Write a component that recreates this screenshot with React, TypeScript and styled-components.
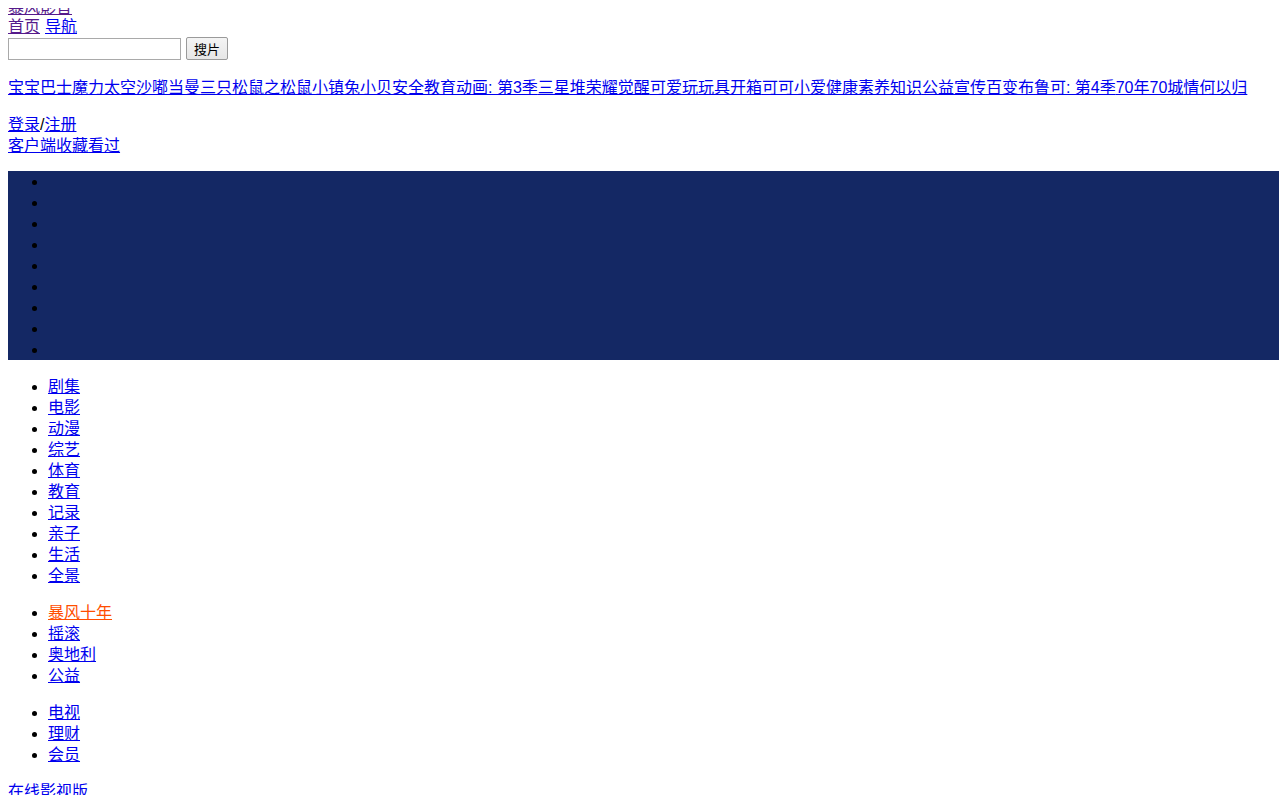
import React from 'react';
import styled, { createGlobalStyle } from 'styled-components';

const GlobalStyle = createGlobalStyle`
  body {
    margin: 8px;
    font-family: "Liberation Sans", "Noto Sans CJK SC", sans-serif;
    font-size: 16px;
    line-height: 21px;
    color: #000;
    background: #fff;
    overflow-x: hidden;
  }
`;

const Link = styled.a<{ $visited?: boolean; $hot?: boolean }>`
  color: ${({ $visited, $hot }) => ($hot ? '#ff4e00' : $visited ? '#551a8b' : '#0000ee')};
  text-decoration: underline;
  cursor: pointer;
`;

const Header = styled.header`
  margin-top: -11px;
`;

const Logo = styled.div`
  height: 19px;
`;

const TopNav = styled.div`
  display: flex;
  gap: 5px;
  height: 21px;
`;

const SearchForm = styled.form`
  display: flex;
  align-items: flex-start;
  gap: 5px;
  height: 24px;
  margin: 0;
`;

const SearchInput = styled.input`
  box-sizing: border-box;
  width: 173px;
  height: 22px;
  margin: 1px 0 0;
  padding: 1px 2px;
  border: 1px solid #a9a9a9;
  font-size: 13px;
`;

const SearchButton = styled.button`
  box-sizing: border-box;
  width: 42px;
  height: 23px;
  margin: 0;
  padding: 0;
  border: 1px solid #9a9a9a;
  border-radius: 2px;
  background: linear-gradient(#f4f4f4, #e6e6e6);
  font-family: "Liberation Sans", "Noto Sans CJK SC", sans-serif;
  font-size: 13px;
  color: #000;
`;

const Ticker = styled.p`
  margin: 16px 0;
  white-space: nowrap;
`;

const UserBox = styled.div`
  display: flex;
  flex-direction: column;
`;

const Slider = styled.ul`
  width: calc(100% + 8px);
  margin: 15px 0 16px;
  padding: 0 0 0 40px;
  box-sizing: border-box;
  background: #142864;
  list-style: disc;
`;

const Slide = styled.li`
  height: 21px;
`;

const MenuList = styled.ul`
  margin: 16px 0;
  padding-left: 40px;
  list-style: disc;
`;

const Footer = styled.p`
  margin: 16px 0;
`;

const tickerItems = [
  '宝宝巴士',
  '魔力太空',
  '沙嘟当曼',
  '三只松鼠之松鼠小镇',
  '兔小贝安全教育动画: 第3季',
  '三星堆荣耀觉醒',
  '可爱玩玩具开箱',
  '可可小爱健康素养知识',
  '公益宣传',
  '百变布鲁可: 第4季',
  '70年70城',
  '情何以归',
];

const channels = ['剧集', '电影', '动漫', '综艺', '体育', '教育', '记录', '亲子', '生活', '全景'];
const specials = ['暴风十年', '摇滚', '奥地利', '公益'];
const extras = ['电视', '理财', '会员'];

const App: React.FC = () => {
  return (
    <>
      <GlobalStyle />
      <Header>
        <Logo>
          <Link $visited>暴风影音</Link>
        </Logo>
        <TopNav>
          <Link $visited>首页</Link>
          <Link>导航</Link>
        </TopNav>
        <SearchForm onSubmit={(e) => e.preventDefault()}>
          <SearchInput type="text" />
          <SearchButton type="submit">搜片</SearchButton>
        </SearchForm>
        <Ticker>
          {tickerItems.map((t) => (
            <Link key={t}>{t}</Link>
          ))}
        </Ticker>
        <UserBox>
          <div>
            <Link>登录</Link>/<Link>注册</Link>
          </div>
          <div>
            <Link>客户端</Link>
            <Link>收藏</Link>
            <Link>看过</Link>
          </div>
        </UserBox>
      </Header>
      <Slider>
        {Array.from({ length: 9 }).map((_, i) => (
          <Slide key={i} />
        ))}
      </Slider>
      <MenuList>
        {channels.map((c) => (
          <li key={c}>
            <Link>{c}</Link>
          </li>
        ))}
      </MenuList>
      <MenuList>
        {specials.map((c, i) => (
          <li key={c}>
            <Link $hot={i === 0}>{c}</Link>
          </li>
        ))}
      </MenuList>
      <MenuList>
        {extras.map((c) => (
          <li key={c}>
            <Link>{c}</Link>
          </li>
        ))}
      </MenuList>
      <Footer>
        <Link>在线影视版</Link>
      </Footer>
    </>
  );
};

export default App;
